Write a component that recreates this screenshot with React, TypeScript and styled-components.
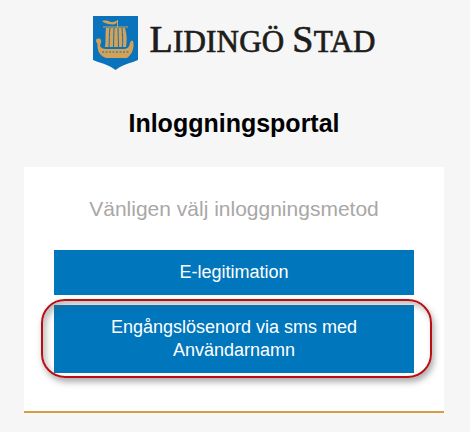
import React from "react";
import styled, { createGlobalStyle } from "styled-components";

const GlobalStyle = createGlobalStyle`
  html, body {
    margin: 0;
    padding: 0;
    background: #f6f6f6;
  }
`;

const Page = styled.div`
  box-sizing: border-box;
  width: 470px;
  height: 432px;
  padding-right: 2px;
  overflow: hidden;
  display: flex;
  flex-direction: column;
  align-items: center;
  font-family: "Liberation Sans", Arial, sans-serif;
`;

const Logo = styled.div`
  height: 54px;
  margin-top: 16px;
  display: flex;
  align-items: center;
  gap: 12px;
`;

const LogoText = styled.div`
  font-family: "Liberation Serif", "Times New Roman", serif;
  font-size: 31px;
  letter-spacing: 0.2px;
  text-transform: uppercase;
  line-height: 47px;
  height: 54px;
  color: #1d1d1b;
  -webkit-text-stroke: 0.7px #1d1d1b;
  white-space: nowrap;
`;

const LogoCap = styled.span`
  font-size: 38px;
`;

const Title = styled.h1`
  margin: 40px 0 0;
  font-size: 25px;
  font-weight: 700;
  line-height: 26px;
  color: #000;
`;

const Card = styled.div`
  position: relative;
  box-sizing: border-box;
  width: 420px;
  height: 246px;
  margin-top: 31px;
  padding: 0 30px;
  background: #fff;
  border-bottom: 2px solid #d69d45;
  display: flex;
  flex-direction: column;
`;

const Lead = styled.p`
  margin: 31px 0 0;
  height: 52px;
  font-size: 21px;
  line-height: 22px;
  color: #aaa7a7;
  text-align: center;
`;

const LoginButton = styled.button`
  display: block;
  width: 360px;
  padding: 11px 20px;
  margin: 0 0 10px;
  border: 0;
  background: #0076bc;
  color: #fff;
  font-family: inherit;
  font-size: 18px;
  line-height: 23px;
  text-align: center;
`;

const Highlight = styled.div`
  position: absolute;
  left: 17px;
  top: 132px;
  width: 391px;
  height: 79px;
  box-sizing: border-box;
  border: 2px solid #b80f14;
  border-radius: 24px;
  box-shadow: 2px 4px 6px rgba(90, 90, 90, 0.5),
    inset 3px 4px 6px rgba(90, 90, 90, 0.4);
  pointer-events: none;
`;

const Shield = () => (
  <svg width="45" height="54" viewBox="0 0 45 54" aria-hidden="true">
    <path d="M0 0H45V44L40 46C33 48 28 50 22.500 54C17 50 12 48 5 46L0 44Z" fill="#0a73bb" />
    <g fill="#d4a256">
      <path d="M9 5C13 4 15 5 18 6C20 6.500 22 5.500 25 4.500L23 7.500C21 9 18 8.500 15.500 8C13 7.500 11 7 9 5Z" />
      <rect x="24" y="4" width="1" height="10" />
      <rect x="10" y="10.500" width="25" height="1" />
      <path d="M13 12H32C34 18 34 25 33 31H12C13 25 12 18 13 12Z" />
      <path d="M3 24C4 22 7 22 8 24C9 26 7 28 7 30C8 32 10 33 13 33H31C35 33 36.500 30 37 27C37.500 24.500 39 24.500 40 25C41.500 30 40 38 34 42H13C7 40 4 35 4.500 28C4 27 3 26 3 24Z" />
    </g>
    <g stroke="#0a73bb" strokeWidth="1" fill="none">
      <path d="M17 12C16 18 16.500 25 16 31" />
      <path d="M21 12C20.500 18 21 25 20.500 31" />
      <path d="M25 12C25 18 25.500 25 25.500 31" />
      <path d="M29 12C29.500 18 30 25 29.500 31" />
      <path d="M9 36H36" strokeDasharray="2 1.500" />
    </g>
  </svg>
);

const App = () => (
  <>
    <GlobalStyle />
    <Page>
      <Logo>
        <Shield />
        <LogoText>
          <LogoCap>L</LogoCap>idingö <LogoCap>S</LogoCap>tad
        </LogoText>
      </Logo>
      <Title>Inloggningsportal</Title>
      <Card>
        <Lead>Vänligen välj inloggningsmetod</Lead>
        <LoginButton type="button">E-legitimation</LoginButton>
        <LoginButton type="button">Engångslösenord via sms med Användarnamn</LoginButton>
        <Highlight />
      </Card>
    </Page>
  </>
);

export default App;
